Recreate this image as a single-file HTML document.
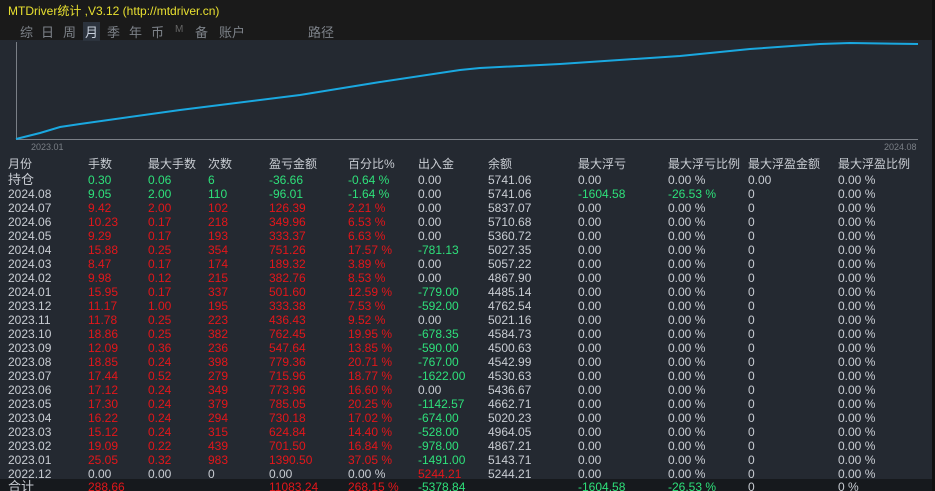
<!DOCTYPE html>
<html><head><meta charset="utf-8"><style>
*{margin:0;padding:0;box-sizing:border-box}
body{width:935px;height:491px;background:#242931;position:relative;overflow:hidden;font-family:"Liberation Sans","Noto Sans CJK SC",sans-serif;font-size:12px;color:#c8ccd2}
.top{position:absolute;left:0;top:0;width:935px;height:40px;background:#1a1a1a}
.title{position:absolute;left:8px;top:2px;color:#e8e030;font-size:12px}
.tabs{position:absolute;left:18px;top:22px;font-size:13px;color:#7d8289}
.tabs span{position:absolute;top:0;white-space:nowrap}
.row{position:absolute;left:0;width:932px;height:14px;line-height:14px}
.row span{position:absolute;top:0;white-space:nowrap}
.g{color:#2ee07a}.r{color:#e3161a}
.tot{background:#16191d;height:12px}
</style></head><body>
<div class="top"></div>
<div class="title">MTDriver统计 ,V3.12 (http://mtdriver.cn)</div>
<div class="tabs">
<span style="left:2px">综</span><span style="left:23px">日</span><span style="left:45px">周</span>
<span style="left:65px;background:#2c333d;color:#c8d0dc;padding:0 2px">月</span>
<span style="left:89px">季</span><span style="left:111px">年</span><span style="left:133px">币</span>
<span style="left:157px;font-size:10px;top:2px;color:#666">M</span><span style="left:177px">备</span>
<span style="left:201px">账户</span><span style="left:290px">路径</span>
</div>
<div style="position:absolute;left:932px;top:0;width:3px;height:491px;background:#111"></div>
<svg style="position:absolute;left:0;top:0" width="935" height="160">
<line x1="16.5" y1="42" x2="16.5" y2="139" stroke="#7a7f86"/>
<line x1="16" y1="139.5" x2="918" y2="139.5" stroke="#7a7f86"/>
<polyline fill="none" stroke="#1aa8e0" stroke-width="2" points="16,139 40,133 60,127 80,124 180,110 300,95 380,82 460,70 480,68 560,64 680,56 700,54 750,49 820,44 850,43 918,44"/>
<text x="31" y="150" fill="#7a7f86" font-size="9" font-family="Liberation Sans">2023.01</text>
<text x="884" y="150" fill="#7a7f86" font-size="9" font-family="Liberation Sans">2024.08</text>
</svg>
<div class="row" style="top:157px;font-size:12px;height:16px">
<span style="left:8px">月份</span><span style="left:88px">手数</span><span style="left:148px">最大手数</span><span style="left:208px">次数</span><span style="left:269px">盈亏金额</span><span style="left:348px">百分比%</span><span style="left:418px">出入金</span><span style="left:488px">余额</span><span style="left:578px">最大浮亏</span><span style="left:668px">最大浮亏比例</span><span style="left:748px">最大浮盈金额</span><span style="left:838px">最大浮盈比例</span>
</div>
<div id="rows"></div>
<script>
var d=[
["持仓","g","0.30","0.06","6","-36.66","-0.64 %","0.00","5741.06","0.00","0.00 %","0.00","0.00 %"],
["2024.08","g","9.05","2.00","110","-96.01","-1.64 %","0.00","5741.06","-1604.58","-26.53 %","0","0.00 %"],
["2024.07","r","9.42","2.00","102","126.39","2.21 %","0.00","5837.07","0.00","0.00 %","0","0.00 %"],
["2024.06","r","10.23","0.17","218","349.96","6.53 %","0.00","5710.68","0.00","0.00 %","0","0.00 %"],
["2024.05","r","9.29","0.17","193","333.37","6.63 %","0.00","5360.72","0.00","0.00 %","0","0.00 %"],
["2024.04","r","15.88","0.25","354","751.26","17.57 %","-781.13","5027.35","0.00","0.00 %","0","0.00 %"],
["2024.03","r","8.47","0.17","174","189.32","3.89 %","0.00","5057.22","0.00","0.00 %","0","0.00 %"],
["2024.02","r","9.98","0.12","215","382.76","8.53 %","0.00","4867.90","0.00","0.00 %","0","0.00 %"],
["2024.01","r","15.95","0.17","337","501.60","12.59 %","-779.00","4485.14","0.00","0.00 %","0","0.00 %"],
["2023.12","r","11.17","1.00","195","333.38","7.53 %","-592.00","4762.54","0.00","0.00 %","0","0.00 %"],
["2023.11","r","11.78","0.25","223","436.43","9.52 %","0.00","5021.16","0.00","0.00 %","0","0.00 %"],
["2023.10","r","18.86","0.25","382","762.45","19.95 %","-678.35","4584.73","0.00","0.00 %","0","0.00 %"],
["2023.09","r","12.09","0.36","236","547.64","13.85 %","-590.00","4500.63","0.00","0.00 %","0","0.00 %"],
["2023.08","r","18.85","0.24","398","779.36","20.71 %","-767.00","4542.99","0.00","0.00 %","0","0.00 %"],
["2023.07","r","17.44","0.52","279","715.96","18.77 %","-1622.00","4530.63","0.00","0.00 %","0","0.00 %"],
["2023.06","r","17.12","0.24","349","773.96","16.60 %","0.00","5436.67","0.00","0.00 %","0","0.00 %"],
["2023.05","r","17.30","0.24","379","785.05","20.25 %","-1142.57","4662.71","0.00","0.00 %","0","0.00 %"],
["2023.04","r","16.22","0.24","294","730.18","17.02 %","-674.00","5020.23","0.00","0.00 %","0","0.00 %"],
["2023.03","r","15.12","0.24","315","624.84","14.40 %","-528.00","4964.05","0.00","0.00 %","0","0.00 %"],
["2023.02","r","19.09","0.22","439","701.50","16.84 %","-978.00","4867.21","0.00","0.00 %","0","0.00 %"],
["2023.01","r","25.05","0.32","983","1390.50","37.05 %","-1491.00","5143.71","0.00","0.00 %","0","0.00 %"],
["2022.12","","0.00","0.00","0","0.00","0.00 %","5244.21","5244.21","0.00","0.00 %","0","0.00 %"]];
var xs=[8,88,148,208,269,348,418,488,578,668,748,838],h="";
d.forEach(function(r,i){
 var top=173+i*14;h+='<div class="row" style="top:'+top+'px">';
 for(var c=0;c<12;c++){var v=c==0?r[0]:r[c+1],cl="";
  if(c>=1&&c<=5)cl=r[1];
  if(c==6){cl=v.charAt(0)=="-"?"g":(v!="0.00"?"r":"");}
  if((c==8||c==9)&&v.charAt(0)=="-")cl="g";
  h+='<span class="'+cl+'" style="left:'+xs[c]+'px'+(c==0&&i==0?';font-size:13px':'')+'">'+v+'</span>';}
 h+='</div>';});
h+='<div class="row tot" style="top:479px;overflow:hidden"><span style="left:8px;font-size:13px;top:1px">合计</span><span class="r" style="left:88px;top:1px">288.66</span><span class="r" style="left:269px;top:1px">11083.24</span><span class="r" style="left:348px;top:1px">268.15 %</span><span class="g" style="left:418px;top:1px">-5378.84</span><span class="g" style="left:578px;top:1px">-1604.58</span><span class="g" style="left:668px;top:1px">-26.53 %</span><span style="left:748px;top:1px">0</span><span style="left:838px;top:1px">0 %</span></div>';
document.getElementById("rows").innerHTML=h;
</script>
</body></html>
